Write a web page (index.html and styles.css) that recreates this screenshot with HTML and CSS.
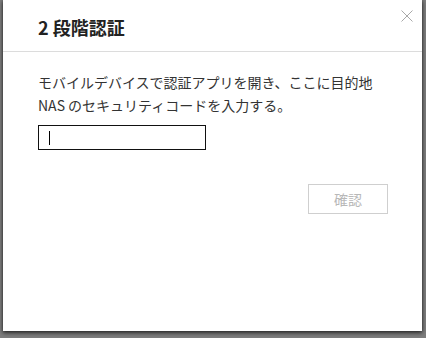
FILE: index.html
```html
<!DOCTYPE html>
<html lang="ja">
<head>
<meta charset="utf-8">
<link rel="stylesheet" href="styles.css">
</head>
<body>
<div class="modal">
  <div class="modal-header">
    <h1 class="title">2 段階認証</h1>
    <button class="close" aria-label="close">
      <svg width="12" height="12" viewBox="0 0 12 12"><path d="M0.5 0.5L11.5 11.5M11.5 0.5L0.5 11.5" stroke="#a8a8a8" stroke-width="1" fill="none"/></svg>
    </button>
  </div>
  <div class="modal-body">
    <p class="desc">モバイルデバイスで認証アプリを開き、ここに目的地<br>NAS のセキュリティコードを入力する。</p>
    <div class="input"><span class="caret"></span></div>
    <div class="actions">
      <button class="confirm">確認</button>
    </div>
  </div>
</div>
</body>
</html>
```
FILE: styles.css
```css
html, body {
  margin: 0;
  padding: 0;
  background: #7d7d7d;
  height: 338px;
  overflow: hidden;
}
body {
  font-family: "Noto Sans CJK JP", "Noto Sans", sans-serif;
  color: #333;
}
.modal {
  margin-left: 3px;
  width: 419px;
  height: 331px;
  background: #fff;
  box-shadow: 0 2px 4px rgba(0,0,0,0.6), 0 0 3px rgba(0,0,0,0.4);
}
.modal-header {
  position: relative;
  height: 51px;
  border-bottom: 1px solid #dcdcdc;
  box-sizing: content-box;
  display: flex;
  align-items: center;
  padding-left: 35px;
}
.title {
  margin: 0;
  font-size: 18px;
  font-weight: bold;
  color: #222;
  padding-top: 3px;
}
.close {
  position: absolute;
  right: 9px;
  top: 10px;
  border: 0;
  background: none;
  padding: 0;
  width: 12px;
  height: 12px;
  display: block;
}
.close svg { display: block; }
.modal-body {
  padding: 19px 34px 0 35px;
}
.desc {
  margin: 0;
  font-size: 14px;
  line-height: 23px;
  color: #333;
}
.input {
  margin-top: 8px;
  width: 166px;
  height: 23px;
  border: 1px solid #111;
  position: relative;
}
.caret {
  position: absolute;
  left: 10px;
  top: 5px;
  width: 1px;
  height: 14px;
  background: #000;
}
.actions {
  display: flex;
  justify-content: flex-end;
  margin-top: 34px;
}
.confirm {
  width: 80px;
  height: 30px;
  border: 1px solid #cfcfcf;
  background: #fff;
  color: #b8b8b8;
  font-family: "Noto Sans CJK JP", sans-serif;
  font-size: 14px;
  padding: 0;
}
```
